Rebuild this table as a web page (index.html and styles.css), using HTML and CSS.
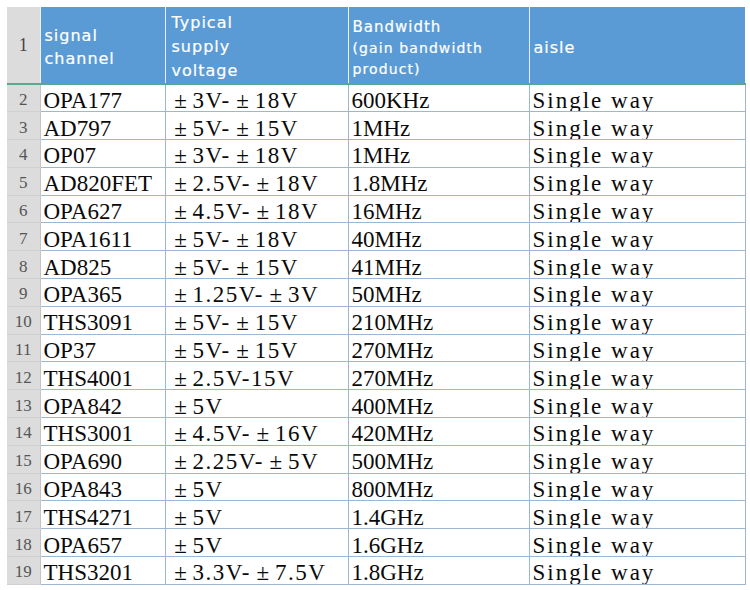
FILE: index.html
```html
<!DOCTYPE html>
<html>
<head>
<meta charset="utf-8">
<link rel="stylesheet" href="styles.css">
</head>
<body>
<table class="sheet">
  <colgroup>
    <col class="c-idx"><col class="c-a"><col class="c-b"><col class="c-c"><col class="c-d">
  </colgroup>
  <thead>
    <tr class="head">
      <th class="idx">1</th>
      <th class="h-a">signal<br>channel</th>
      <th class="h-b">Typical<br>supply<br>voltage</th>
      <th class="h-c"><span class="big">Bandwidth</span><br>(gain bandwidth<br>product)</th>
      <th class="h-d">aisle</th>
    </tr>
  </thead>
  <tbody>
    <tr><td class="idx">2</td><td>OPA177</td><td class="volt"><span class="pm">±</span>3V-<span class="pm">±</span>18V</td><td>600KHz</td><td class="way">Single way</td></tr>
    <tr><td class="idx">3</td><td>AD797</td><td class="volt"><span class="pm">±</span>5V-<span class="pm">±</span>15V</td><td>1MHz</td><td class="way">Single way</td></tr>
    <tr><td class="idx">4</td><td>OP07</td><td class="volt"><span class="pm">±</span>3V-<span class="pm">±</span>18V</td><td>1MHz</td><td class="way">Single way</td></tr>
    <tr><td class="idx">5</td><td>AD820FET</td><td class="volt"><span class="pm">±</span>2.5V-<span class="pm">±</span>18V</td><td>1.8MHz</td><td class="way">Single way</td></tr>
    <tr><td class="idx">6</td><td>OPA627</td><td class="volt"><span class="pm">±</span>4.5V-<span class="pm">±</span>18V</td><td>16MHz</td><td class="way">Single way</td></tr>
    <tr><td class="idx">7</td><td>OPA1611</td><td class="volt"><span class="pm">±</span>5V-<span class="pm">±</span>18V</td><td>40MHz</td><td class="way">Single way</td></tr>
    <tr><td class="idx">8</td><td>AD825</td><td class="volt"><span class="pm">±</span>5V-<span class="pm">±</span>15V</td><td>41MHz</td><td class="way">Single way</td></tr>
    <tr><td class="idx">9</td><td>OPA365</td><td class="volt"><span class="pm">±</span>1.25V-<span class="pm">±</span>3V</td><td>50MHz</td><td class="way">Single way</td></tr>
    <tr><td class="idx">10</td><td>THS3091</td><td class="volt"><span class="pm">±</span>5V-<span class="pm">±</span>15V</td><td>210MHz</td><td class="way">Single way</td></tr>
    <tr><td class="idx">11</td><td>OP37</td><td class="volt"><span class="pm">±</span>5V-<span class="pm">±</span>15V</td><td>270MHz</td><td class="way">Single way</td></tr>
    <tr><td class="idx">12</td><td>THS4001</td><td class="volt"><span class="pm">±</span>2.5V-15V</td><td>270MHz</td><td class="way">Single way</td></tr>
    <tr><td class="idx">13</td><td>OPA842</td><td class="volt"><span class="pm">±</span>5V</td><td>400MHz</td><td class="way">Single way</td></tr>
    <tr><td class="idx">14</td><td>THS3001</td><td class="volt"><span class="pm">±</span>4.5V-<span class="pm">±</span>16V</td><td>420MHz</td><td class="way">Single way</td></tr>
    <tr><td class="idx">15</td><td>OPA690</td><td class="volt"><span class="pm">±</span>2.25V-<span class="pm">±</span>5V</td><td>500MHz</td><td class="way">Single way</td></tr>
    <tr><td class="idx">16</td><td>OPA843</td><td class="volt"><span class="pm">±</span>5V</td><td>800MHz</td><td class="way">Single way</td></tr>
    <tr><td class="idx">17</td><td>THS4271</td><td class="volt"><span class="pm">±</span>5V</td><td>1.4GHz</td><td class="way">Single way</td></tr>
    <tr><td class="idx">18</td><td>OPA657</td><td class="volt"><span class="pm">±</span>5V</td><td>1.6GHz</td><td class="way">Single way</td></tr>
    <tr><td class="idx">19</td><td>THS3201</td><td class="volt"><span class="pm">±</span>3.3V-<span class="pm">±</span>7.5V</td><td>1.8GHz</td><td class="way">Single way</td></tr>
  </tbody>
</table>
</body>
</html>
```
FILE: styles.css
```css
html, body {
  margin: 0;
  padding: 0;
  background: #ffffff;
}
body {
  padding: 7px 0 0 7px;
}
.sheet {
  border-collapse: collapse;
  table-layout: fixed;
  width: 738px;
  font-family: "Liberation Serif", "Noto Sans CJK SC", serif;
  color: #111111;
}
.c-idx { width: 33px; }
.c-a { width: 125px; }
.c-b { width: 183px; }
.c-c { width: 181px; }
.c-d { width: 216px; }

.head {
  height: 75px;
}
.head th {
  background: #5b9bd5;
  color: #ffffff;
  font-family: "DejaVu Sans", sans-serif;
  font-weight: normal;
  -webkit-text-stroke: 0.2px #ffffff;
  text-align: left;
  vertical-align: middle;
  padding: 0 0 0 4px;
  border-left: 1px solid #e8f1fa;
  border-bottom: 2px solid #5aa88e;
  font-size: 16px;
  letter-spacing: 1px;
  line-height: 23px;
}
.head th.idx {
  background: #dcdcdc;
  color: #444444;
  font-family: "Liberation Serif", serif;
  -webkit-text-stroke: 0;
  font-size: 18px;
  letter-spacing: 0;
  text-align: center;
  padding: 0;
  border-left: none;
}
.head .h-a { padding-top: 4px; }
.head .h-b { line-height: 24px; padding: 4px 0 0 6px; }
.head .h-c {
  font-size: 14px;
  letter-spacing: 1.1px;
  line-height: 21px;
  padding-top: 6px;
}
.head .h-c .big {
  font-size: 15px;
  letter-spacing: 1px;
}
.head .h-d { padding-top: 4px; }

tbody tr {
  height: 27.8px;
}
tbody td {
  border: 1px solid #9bb7d4;
  padding: 5px 0 0 3px;
  font-size: 23px;
  line-height: 21px;
  white-space: nowrap;
  overflow: hidden;
  vertical-align: middle;
  color: #0a0a0a;
}
tbody td.volt {
  letter-spacing: 1.5px;
}
tbody td.way {
  letter-spacing: 2px;
}
tbody td.idx {
  background: #dcdcdc;
  color: #555555;
  font-size: 17px;
  text-align: center;
  padding: 3px 0 0 0;
  border-left: none;
  border-top: 1px solid #d0d0d0;
  border-bottom: 1px solid #d0d0d0;
  border-right: 1px solid #c4c4c4;
}
.pm {
  display: inline-block;
  width: 24px;
  text-align: center;
  letter-spacing: 0;
}
```
